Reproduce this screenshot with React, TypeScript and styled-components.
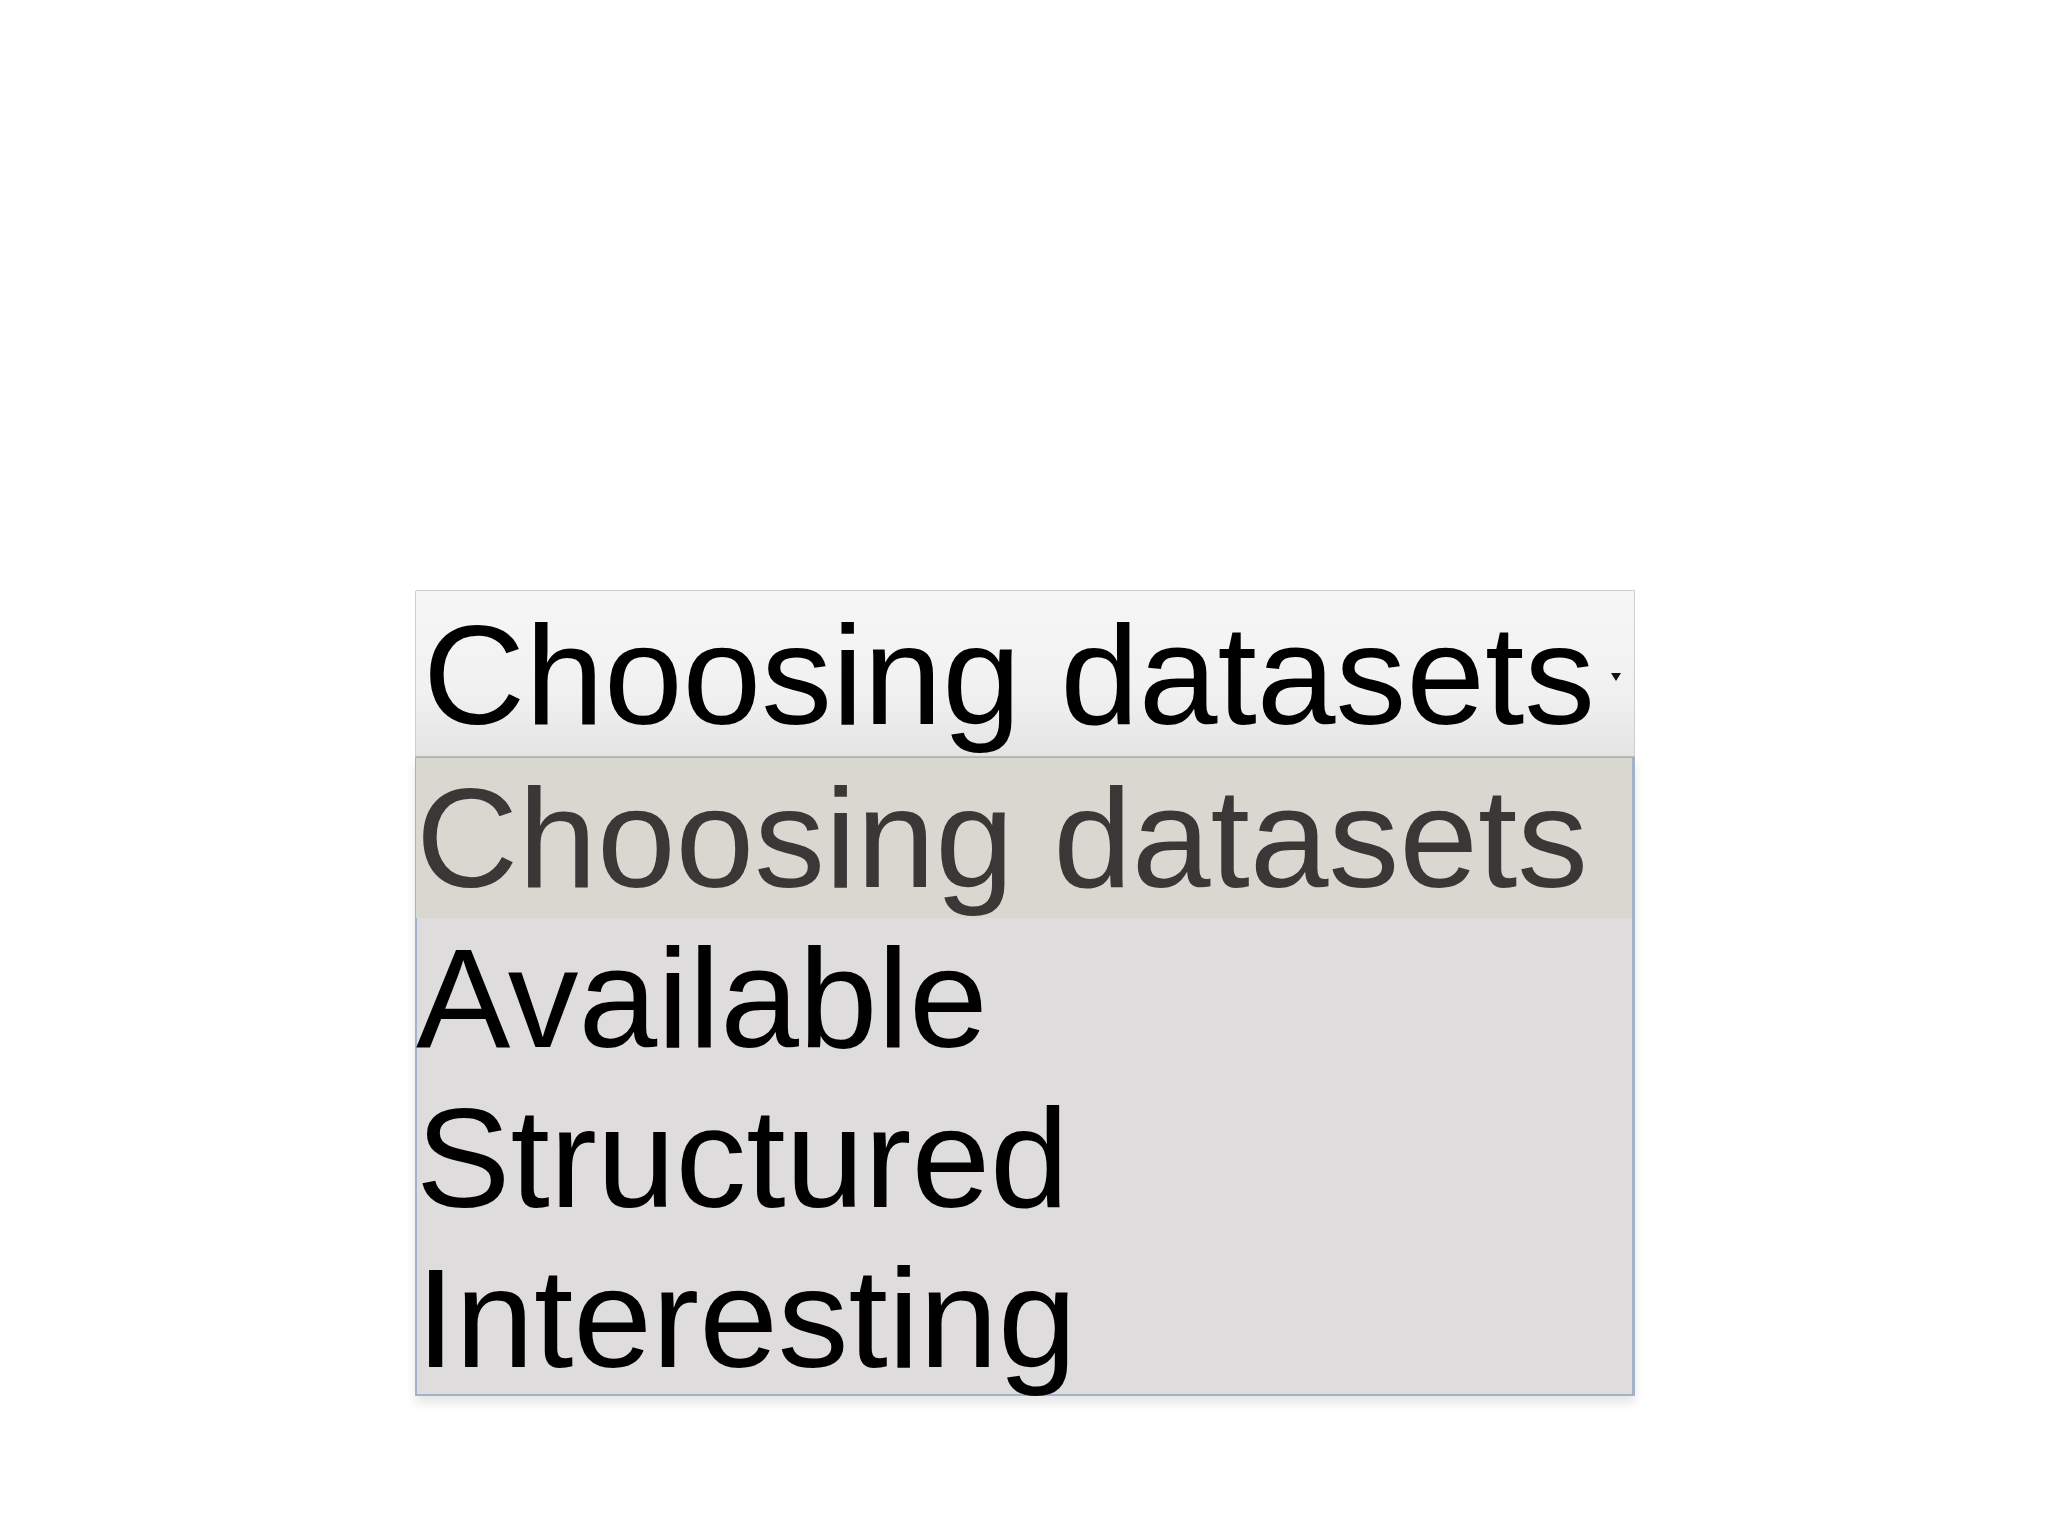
import styled, { createGlobalStyle } from "styled-components"

const GlobalStyle = createGlobalStyle`
    html, body {
        margin: 0;
        padding: 0;
        background: #fff;
    }
    body {
        font-family: "Liberation Sans", Arial, sans-serif;
    }
`

const Page = styled.div`
    display: flex;
    flex-direction: column;
    padding: 590px 0 0 415px;
    min-height: 1536px;
    box-sizing: border-box;
`

const Dropdown = styled.div`
    display: flex;
    flex-direction: column;
    width: 1220px;
`

const SelectBox = styled.div`
    display: flex;
    align-items: center;
    justify-content: space-between;
    height: 167px;
    box-sizing: border-box;
    padding: 0 12px 0 7px;
    border: 1px solid #cdcdcd;
    border-bottom-color: #bdbdbd;
    border-radius: 2px 2px 0 0;
    background: linear-gradient(to bottom, #f6f6f6 0%, #f1f1f1 60%, #e4e4e4 100%);
`

const SelectLabel = styled.span`
    font-size: 141.5px;
    line-height: 160px;
    color: #000;
    white-space: nowrap;
    margin-top: 2px;
`

const Arrow = styled.svg`
    width: 12px;
    height: 10px;
    margin-top: 6px;
    flex-shrink: 0;
`

const List = styled.ul`
    list-style: none;
    margin: 0;
    padding: 0;
    height: 639px;
    box-sizing: border-box;
    background: #dedcdd;
    border: 2px solid #a3b2c8;
    border-top-width: 1px;
    border-right-width: 3px;
    box-shadow: 0 7px 10px rgba(0, 0, 0, 0.1);
`

const Item = styled.li<{ $active?: boolean }>`
    height: 160px;
    font-size: 141.5px;
    line-height: 160px;
    white-space: nowrap;
    color: ${(p) => (p.$active ? "#3a3836" : "#000")};
    background: ${(p) => (p.$active ? "#d9d8d0" : "transparent")};
    margin-left: -1px;
`

const options = ["Choosing datasets", "Available", "Structured", "Interesting"]

export default function App() {
    return (
        <>
            <GlobalStyle />
            <Page>
                <Dropdown>
                    <SelectBox>
                        <SelectLabel>Choosing datasets</SelectLabel>
                        <Arrow viewBox="0 0 12 10">
                            <path d="M1 1 L11 1 L6 9 Z" fill="#111" />
                        </Arrow>
                    </SelectBox>
                    <List>
                        {options.map((o, i) => (
                            <Item key={o} $active={i === 0}>
                                {o}
                            </Item>
                        ))}
                    </List>
                </Dropdown>
            </Page>
        </>
    )
}
